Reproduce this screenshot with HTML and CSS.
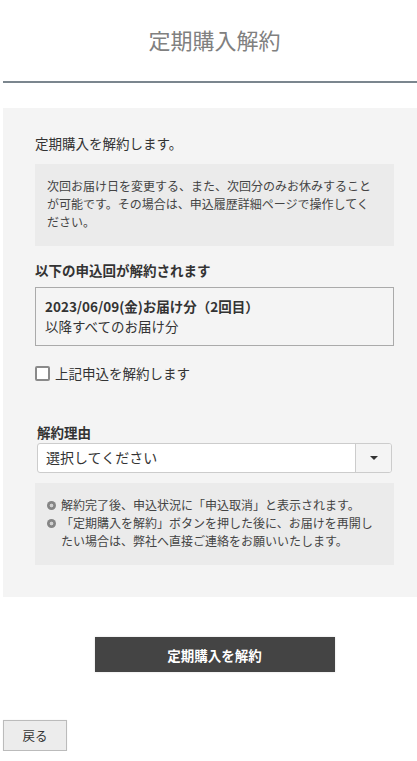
FILE: index.html
```html
<!DOCTYPE html>
<html lang="ja">
<head>
<meta charset="utf-8">
<title>定期購入解約</title>
<link rel="stylesheet" href="styles.css">
</head>
<body>
<div class="page">
  <header class="page-header">
    <h1 class="page-title">定期購入解約</h1>
  </header>

  <section class="panel">
    <p class="lead">定期購入を解約します。</p>
    <div class="info-box">次回お届け日を変更する、また、次回分のみお休みすることが可能です。その場合は、申込履歴詳細ページで操作してください。</div>

    <h2 class="section-label">以下の申込回が解約されます</h2>
    <div class="target-box">
      <div class="target-main">2023/06/09(金)お届け分（2回目）</div>
      <div class="target-sub">以降すべてのお届け分</div>
    </div>

    <label class="check-row">
      <span class="checkbox"></span>
      <span class="check-label">上記申込を解約します</span>
    </label>

    <div class="reason-group">
      <div class="reason-label">解約理由</div>
      <div class="select">
        <span class="select-text">選択してください</span>
        <span class="select-arrow"><span class="caret"></span></span>
      </div>
    </div>

    <ul class="notes">
      <li>解約完了後、申込状況に「申込取消」と表示されます。</li>
      <li>「定期購入を解約」ボタンを押した後に、お届けを再開したい場合は、弊社へ直接ご連絡をお願いいたします。</li>
    </ul>
  </section>

  <div class="submit-row">
    <button class="btn-submit" type="button">定期購入を解約</button>
  </div>

  <div class="back-row">
    <button class="btn-back" type="button">戻る</button>
  </div>
</div>
</body>
</html>
```

FILE: styles.css
```css
html, body {
  margin: 0;
  padding: 0;
  overflow-x: hidden;
  background: #fff;
}

body {
  font-family: "Noto Sans CJK JP", "Noto Sans", sans-serif;
  color: #333;
}

.page {
  width: 423px;
  margin-left: 3px;
}

.page-header {
  height: 81px;
  border-bottom: 2px solid #7b868e;
  display: flex;
  align-items: flex-start;
  justify-content: center;
}

.page-title {
  margin: 24px 0 0;
  font-size: 22px;
  font-weight: normal;
  line-height: 30px;
  color: #808080;
}

.panel {
  margin-top: 25px;
  background: #f4f4f4;
  padding: 24px 32px 32px;
}

.lead {
  margin: 0;
  font-size: 13.5px;
  line-height: 22px;
}

.info-box {
  margin-top: 10px;
  background: #ebebeb;
  padding: 13px 20px 15px 12px;
  font-size: 12px;
  line-height: 18px;
  color: #444;
}

.section-label {
  margin: 14px 0 0;
  font-size: 13.5px;
  font-weight: bold;
  line-height: 20px;
}

.target-box {
  margin-top: 7px;
  border: 1px solid #aaa;
  padding: 8px 9px 9px;
  font-size: 13.5px;
  line-height: 20px;
}

.target-main {
  font-weight: bold;
}

.check-row {
  margin-top: 18px;
  display: flex;
  align-items: center;
  gap: 5px;
}

.checkbox {
  width: 11px;
  height: 11px;
  border: 2px solid #8a8a8a;
  border-radius: 2px;
  background: #fff;
  flex: none;
}

.check-label {
  font-size: 13.5px;
  line-height: 18px;
}

.reason-group {
  margin-top: 40px;
  padding: 0 2px;
}

.reason-label {
  font-size: 13.5px;
  font-weight: bold;
  line-height: 20px;
}

.select {
  margin-top: 1px;
  height: 28px;
  border: 1px solid #ccc;
  border-radius: 3px;
  background: #fff;
  display: flex;
  align-items: stretch;
  overflow: hidden;
}

.select-text {
  flex: 1;
  padding-left: 8px;
  font-size: 14px;
  line-height: 27px;
  color: #333;
}

.select-arrow {
  width: 35px;
  border-left: 1px solid #ccc;
  background: #f4f4f4;
  display: flex;
  align-items: center;
  justify-content: center;
}

.caret {
  width: 0;
  height: 0;
  border-left: 4px solid transparent;
  border-right: 4px solid transparent;
  border-top: 4px solid #333;
}

.notes {
  margin: 10px 0 0;
  list-style: none;
  background: #ebebeb;
  padding: 13px 12px 15px 26px;
  font-size: 12px;
  line-height: 18px;
  color: #444;
}

.notes li {
  position: relative;
}

.notes li::before {
  content: "";
  position: absolute;
  left: -14px;
  top: 4.5px;
  width: 9px;
  height: 9px;
  border-radius: 50%;
  background: radial-gradient(circle, #d0d0d0 0 1.5px, #858585 2.2px);
}

.submit-row {
  padding-top: 40px;
  display: flex;
  justify-content: center;
}

.btn-submit {
  width: 240px;
  height: 35px;
  border: none;
  background: #444;
  color: #fff;
  font-family: inherit;
  font-size: 13.5px;
  font-weight: bold;
  box-shadow: 0 0 2px rgba(0, 0, 0, 0.15);
  cursor: pointer;
}

.back-row {
  padding-top: 48px;
}

.btn-back {
  width: 64px;
  height: 31px;
  border: 1px solid #bbb;
  background: #ececec;
  color: #333;
  font-family: inherit;
  font-size: 12.5px;
  padding: 0;
  box-shadow: 0 0 1px rgba(0, 0, 0, 0.1);
  cursor: pointer;
}
```
